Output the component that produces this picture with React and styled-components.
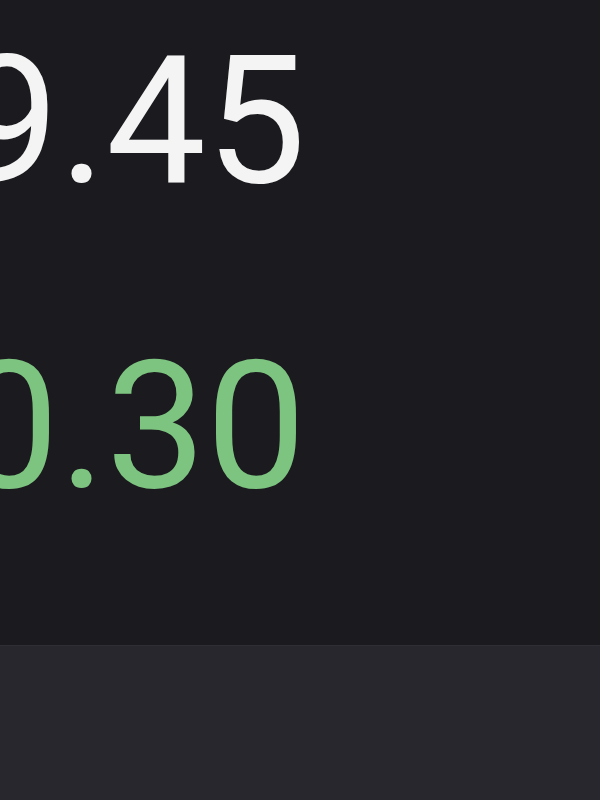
import React from "react";
import styled, { createGlobalStyle } from "styled-components";

const Global = createGlobalStyle`
  html, body { margin: 0; padding: 0; background: #1b1a1f; overflow: hidden; }
  #root { width: 600px; height: 800px; }
`;

const Screen = styled.div`
  width: 600px;
  height: 800px;
  display: flex;
  flex-direction: column;
  background: #1b1a1f;
  font-family: Roboto, Inter, sans-serif;
  overflow: hidden;
`;

const Main = styled.div`
  height: 645px;
  display: flex;
  flex-direction: column;
  padding-top: 32px;
  gap: 127px;
  box-sizing: border-box;
`;

const ValueRow = styled.div`
  width: 306px;
  display: flex;
  justify-content: flex-end;
`;

const Value = styled.span`
  font-size: 178px;
  line-height: 1;
  font-weight: 400;
  letter-spacing: 0;
  white-space: nowrap;
  color: ${(p) => p.$color};
`;

const Footer = styled.div`
  flex: 1;
  background: #28272d;
  border-top: 1px solid #2f2e34;
`;

export default function App() {
  return (
    <>
      <Global />
      <Screen>
        <Main>
          <ValueRow>
            <Value $color="#f4f4f4">$149.45</Value>
          </ValueRow>
          <ValueRow>
            <Value $color="#7cc47f">+0.30</Value>
          </ValueRow>
        </Main>
        <Footer />
      </Screen>
    </>
  );
}
